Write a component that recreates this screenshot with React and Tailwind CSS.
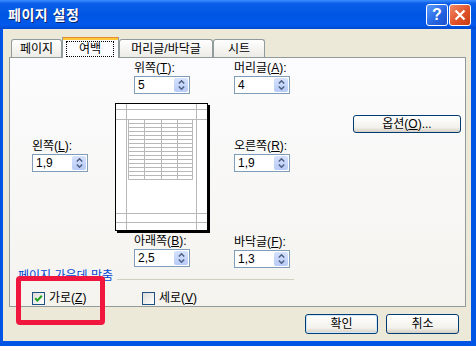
const FONT = "font-['Liberation_Sans','Noto_Sans_CJK_KR',sans-serif]";

const Label = ({ children }) => (
  <div className="h-[16px] whitespace-nowrap text-[12px] leading-[16px] text-black">
    {children}
  </div>
);

const SpinBox = ({ value }) => (
  <div className="flex h-[18px] w-[56px] border border-[#7f9db9] bg-white">
    <div className="flex-1 pl-[3px] text-[12px] leading-[16px] text-black">
      {value}
    </div>
    <div className="m-[1px] flex w-[14px] flex-col items-center justify-between rounded-[2px] bg-[linear-gradient(to_bottom,#d6e2fd,#b7cbf7)] py-[2px]">
      <svg width="7" height="4" viewBox="0 0 7 4">
        <path d="M0.8 3.5 L3.5 0.8 L6.2 3.5" fill="none" stroke="#4d6185" strokeWidth="1.5" />
      </svg>
      <svg width="7" height="4" viewBox="0 0 7 4">
        <path d="M0.8 0.5 L3.5 3.2 L6.2 0.5" fill="none" stroke="#4d6185" strokeWidth="1.5" />
      </svg>
    </div>
  </div>
);

const Field = ({ label, value, className = "" }) => (
  <div className={className}>
    <Label>{label}</Label>
    <SpinBox value={value} />
  </div>
);

const Checkbox = ({ checked }) => (
  <div className="flex h-[13px] w-[13px] items-center justify-center border border-[#1c5180] bg-[linear-gradient(135deg,#dcdcd7,#ffffff)]">
    {checked && (
      <svg width="9" height="9" viewBox="0 0 9 9">
        <path d="M1.2 4.2 L3.4 6.6 L7.8 1.8" fill="none" stroke="#21a121" strokeWidth="2" />
      </svg>
    )}
  </div>
);

const PagePreview = () => {
  const rows = Array.from({ length: 16 }, (_, i) => 16.5 + i * 4);
  const cols = [13.5, 29.5, 46.5, 62.5, 77.5];
  return (
    <svg width="95" height="130" viewBox="0 0 95 130">
      <rect x="0.5" y="0.5" width="92" height="127" fill="#ffffff" stroke="#000000" />
      <rect x="93" y="2" width="2" height="128" fill="#000000" />
      <rect x="2" y="128" width="93" height="2" fill="#000000" />
      <g stroke="#b8b8b8" strokeWidth="1">
        <line x1="11.5" y1="1" x2="11.5" y2="127" />
        <line x1="81.5" y1="1" x2="81.5" y2="127" />
        <line x1="1" y1="6.5" x2="92" y2="6.5" />
        <line x1="1" y1="16.5" x2="92" y2="16.5" />
        <line x1="1" y1="110.5" x2="92" y2="110.5" />
        <line x1="1" y1="119.5" x2="92" y2="119.5" />
        {rows.map((y) => (
          <line key={y} x1="13.5" y1={y} x2="77.5" y2={y} />
        ))}
        {cols.map((x) => (
          <line key={x} x1={x} y1="16.5" x2={x} y2="76.5" />
        ))}
      </g>
    </svg>
  );
};

const Tab = ({ children, width }) => (
  <div
    className="flex h-[18px] items-center justify-center rounded-t-[3px] border border-b-0 border-[#919b9c] bg-[linear-gradient(to_bottom,#ffffff,#ecebe6)] text-[12px] leading-[16px] text-black"
    style={{ width }}
  >
    {children}
  </div>
);

const XpButton = ({ children, className = "" }) => (
  <button
    className={
      "flex items-center justify-center rounded-[3px] border border-[#003c74] bg-[linear-gradient(to_bottom,#ffffff,#f3f2ec_70%,#d6d0c5)] text-[12px] leading-[16px] text-black " +
      className
    }
  >
    {children}
  </button>
);

export default function App() {
  return (
    <div className={"relative flex h-[346px] w-[476px] flex-col overflow-hidden bg-[#0055e5] " + FONT}>
      {/* Title bar */}
      <div className="flex h-[29px] shrink-0 items-start bg-[linear-gradient(to_bottom,#3d8dff_0%,#0a5ee8_12%,#0056e4_50%,#0059ec_85%,#0049cf_100%)] pl-[8px] pr-[5px]">
        <span className="mt-[6px] text-[14px] font-bold leading-[18px] tracking-[0.5px] text-white [text-shadow:1px_1px_0_#0a246a]">
          페이지 설정
        </span>
        <div className="ml-auto mt-[4px] flex gap-[1px]">
          <div className="flex h-[22px] w-[22px] items-center justify-center rounded-[3px] border border-white bg-[linear-gradient(135deg,#5a9cff,#2463e0_60%,#1b4fd0)]">
            <span className="text-[16px] font-bold leading-[16px] text-white">?</span>
          </div>
          <div className="flex h-[22px] w-[22px] items-center justify-center rounded-[3px] border border-white bg-[linear-gradient(135deg,#f08a6a,#e0532a_55%,#c83c14)]">
            <svg width="12" height="12" viewBox="0 0 12 12">
              <path d="M1.5 1.5 L10.5 10.5 M10.5 1.5 L1.5 10.5" stroke="#ffffff" strokeWidth="2.2" />
            </svg>
          </div>
        </div>
      </div>

      {/* Client area */}
      <div className="mb-[5px] ml-[3px] mr-[5px] flex flex-1 flex-col bg-[#ece9d8]">
        {/* Tabs */}
        <div className="ml-[8px] mt-[8px] flex h-[20px] items-end">
          <Tab width={51}>페이지</Tab>
          <div className="relative z-10 -mb-px flex h-[21px] w-[57px] flex-col border-x border-[#919b9c] bg-[#fcfcfe]">
            <div className="h-px bg-[#e68b2c]" />
            <div className="h-[2px] bg-[#ffc83c]" />
            <div className="ml-[3px] mt-px flex h-[16px] w-[48px] items-center justify-center border border-dotted border-black text-[12px] leading-[14px] text-black">
              여백
            </div>
          </div>
          <Tab width={94}>머리글/바닥글</Tab>
          <Tab width={52}>시트</Tab>
        </div>

        {/* Panel */}
        <div className="ml-[6px] flex h-[250px] w-[457px] flex-col border border-[#919b9c] bg-[linear-gradient(to_bottom,#fcfcfe,#f4f3ee)]">
          <div className="flex items-start pt-[2px]">
            {/* Left */}
            <div className="ml-[22px] mt-[78px] w-[56px]">
              <Field label={<>왼쪽(<u>L</u>):</>} value="1,9" />
            </div>
            {/* Center */}
            <div className="ml-[27px] flex w-[95px] flex-col">
              <Field className="ml-[19px]" label={<>위쪽(<u>T</u>):</>} value="5" />
              <div className="mt-[9px]">
                <PagePreview />
              </div>
              <Field className="ml-[19px]" label={<>아래쪽(<u>B</u>):</>} value="2,5" />
            </div>
            {/* Right */}
            <div className="ml-[24px] flex w-[56px] flex-col">
              <Field label={<>머리글(<u>A</u>):</>} value="4" />
              <Field className="mt-[44px]" label={<>오른쪽(<u>R</u>):</>} value="1,9" />
              <Field className="mt-[62px]" label={<>바닥글(<u>F</u>):</>} value="1,3" />
            </div>
            {/* Options */}
            <XpButton className="ml-[63px] mt-[55px] h-[18px] w-[108px]">
              옵션(<u>O</u>)...
            </XpButton>
          </div>

          {/* Center on page */}
          <div className="mt-px flex h-[14px] w-[284px] items-start pl-[8px]">
            <span className="whitespace-nowrap text-[12px] leading-[14px] text-[#0046d5]">
              페이지 가운데 맞춤
            </span>
            <div className="ml-[4px] mt-[10px] h-px flex-1 bg-[#d0d0bf]" />
          </div>

          <div className="mt-[9px] flex h-[13px] items-center pl-[22px]">
            <div className="flex w-[110px] items-center gap-[4px]">
              <Checkbox checked />
              <span className="text-[12px] leading-[13px] text-black">
                가로(<u>Z</u>)
              </span>
            </div>
            <div className="flex items-center gap-[4px]">
              <Checkbox />
              <span className="text-[12px] leading-[13px] text-black">
                세로(<u>V</u>)
              </span>
            </div>
          </div>
        </div>

        {/* Dialog buttons */}
        <div className="mt-[7px] flex justify-end gap-[8px] pr-[12px]">
          <XpButton className="h-[20px] w-[73px] shadow-[inset_0_0_0_1px_#cee7ff]">확인</XpButton>
          <XpButton className="h-[20px] w-[73px]">취소</XpButton>
        </div>
      </div>

      {/* Red highlight annotation */}
      <div className="absolute left-[16px] top-[276px] h-[49px] w-[89px] rounded-[4px] border-[5px] border-[#f0163e]" />
    </div>
  );
}
